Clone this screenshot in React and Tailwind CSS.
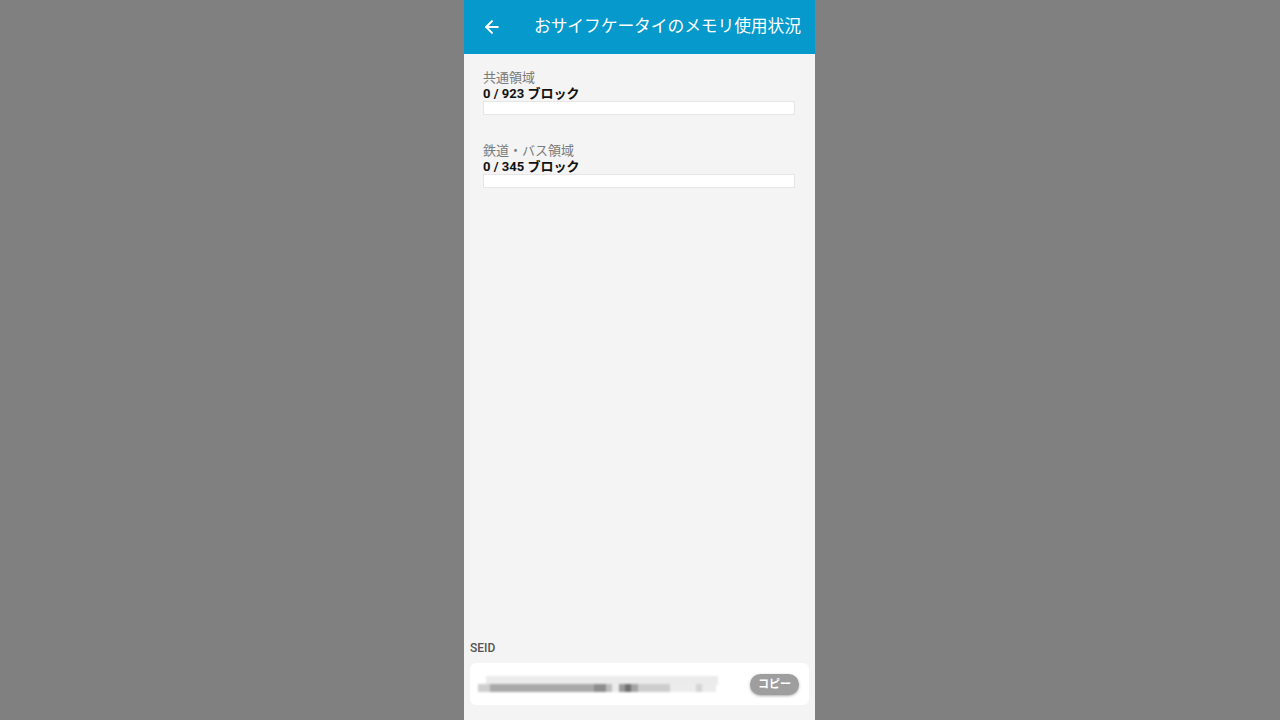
import { ArrowLeft } from "lucide-react";

const font = { fontFamily: '"Roboto", "Noto Sans CJK JP", sans-serif' };

const Area = ({ label, used, total }) => (
  <div>
    <p className="text-[13px] leading-[16px] text-[#7a7a7a]">{label}</p>
    <p className="text-[13px] leading-[15px] font-bold text-[#111]">
      {used} / {total} ブロック
    </p>
    <div className="h-[14px] w-[312px] bg-white border border-[#e6e6e6]"></div>
  </div>
);

export default function App() {
  return (
    <div className="h-[720px] w-full bg-[#808080] flex" style={font}>
      <div className="ml-[464px] w-[351px] h-full bg-[#f4f4f4] flex flex-col">
        {/* toolbar */}
        <div className="h-[54px] bg-[#0599cc] flex items-center shrink-0">
          <ArrowLeft className="ml-[18px] text-white" size={20} strokeWidth={2.4} />
          <h1 className="ml-[32px] text-white text-[16.8px] tracking-[-0.1px] whitespace-nowrap">
            おサイフケータイのメモリ使用状況
          </h1>
        </div>

        {/* memory areas */}
        <div className="px-[19px] pt-[16px] flex flex-col gap-[28px]">
          <Area label="共通領域" used={0} total={923} />
          <Area label="鉄道・バス領域" used={0} total={345} />
        </div>

        <div className="flex-1"></div>

        {/* SEID */}
        <div className="px-[6px] pb-[15px]">
          <p className="text-[12px] font-medium text-[#555] leading-[14px]">SEID</p>
          <div className="mt-[8px] h-[42px] bg-white rounded-[6px] flex items-center pl-[8px] pr-[10px]">
            <div className="flex-1 relative h-[20px] blur-[0.8px]">
              <div className="absolute left-[8px] top-[2px] h-[9px] w-[232px] bg-[#ebebeb]"></div>
              <div className="absolute left-0 top-[10px] h-[8px] flex">
                <div className="w-[12px] bg-[#cfcfcf]"></div>
                <div className="w-[104px] bg-[#a9a9a9]"></div>
                <div className="w-[12px] bg-[#8d8d8d]"></div>
                <div className="w-[6px] bg-[#bdbdbd]"></div>
                <div className="w-[7px] bg-[#ececec]"></div>
                <div className="w-[6px] bg-[#9a9a9a]"></div>
                <div className="w-[6px] bg-[#6f6f6f]"></div>
                <div className="w-[7px] bg-[#a3a3a3]"></div>
                <div className="w-[32px] bg-[#cdcdcd]"></div>
                <div className="w-[26px] bg-[#ececec]"></div>
                <div className="w-[6px] bg-[#d4d4d4]"></div>
                <div className="w-[14px] bg-[#ececec]"></div>
              </div>
            </div>
            <button className="h-[21px] px-[8px] rounded-full bg-[#9e9e9e] text-white text-[11px] font-bold leading-none shadow-[0_1px_3px_rgba(0,0,0,0.35)]">
              コピー
            </button>
          </div>
        </div>
      </div>
    </div>
  );
}
